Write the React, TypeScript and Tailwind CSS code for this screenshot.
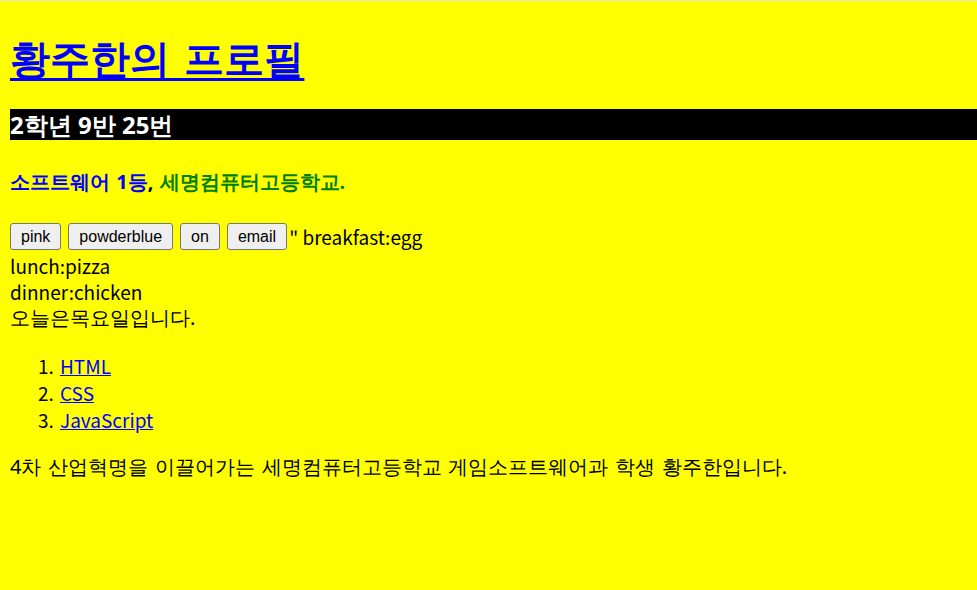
import React from 'react';

// Korean lines: Latin from Noto Sans, Hangul falls back to the full-width system face
const kr = "font-['Noto_Sans',sans-serif]";
// Latin-only lines
const lat = "font-['Noto_Sans_CJK_KR','Noto_Sans',sans-serif]";

export default function App() {
  const buttons = ['pink', 'powderblue', 'on', 'email'];
  const subjects = ['HTML', 'CSS', 'JavaScript'];

  return (
    <div className="min-h-[590px] w-full bg-[#ffff00] text-black">
      <div className="h-px bg-[#e3e3e3]" />
      <div className="pl-[10px]">
        {/* title */}
        <h1 className={`mt-[30px] text-[40px] leading-[53px] font-bold [word-spacing:4px] ${kr}`}>
          <a href="#" className="text-[#0000ff] underline decoration-[3px] underline-offset-[5px]">
            황주한의 프로필
          </a>
        </h1>

        <h2 className={`mt-[25px] bg-black text-white text-[24px] font-bold leading-[31px] ${kr}`}>
          2학년 9반 25번
        </h2>

        <p className={`mt-[28px] text-[20px] font-bold leading-[27px] [word-spacing:1px] ${kr}`}>
          <span className="text-[#0000ff]">소프트웨어 1등</span>
          <span>, </span>
          <span className="text-[#008000]">세명컴퓨터고등학교.</span>
        </p>

        {/* buttons + meals */}
        <div className={`mt-[28px] text-[19px] leading-[26px] ${lat}`}>
          <div className="flex items-start h-[30px]">
            <div className="flex gap-[7px]">
              {buttons.map((b) => (
                <button
                  key={b}
                  className="h-[27px] px-[10px] border border-[#767676] rounded-[3px] bg-[#efefef] text-[16px] leading-[18px] text-black font-['Liberation_Sans',Arial,sans-serif]"
                >
                  {b}
                </button>
              ))}
            </div>
            <span className="ml-[2px] whitespace-pre leading-[27px]">" breakfast:egg</span>
          </div>
          <div>lunch:pizza</div>
          <div>dinner:chicken</div>
          <div className={`text-[20px] ${kr}`}>오늘은목요일입니다.</div>
        </div>

        {/* subjects */}
        <ol className={`mt-[21px] pl-[28px] text-[19px] leading-[27px] ${lat}`}>
          {subjects.map((s, i) => (
            <li key={s} className="flex">
              <span className="w-[22px]">{i + 1}.</span>
              <a href="#" className="text-[#0000ff] underline">
                {s}
              </a>
            </li>
          ))}
        </ol>

        <p className={`mt-[20px] text-[20px] leading-[27px] [word-spacing:1.5px] ${kr}`}>
          4차 산업혁명을 이끌어가는 세명컴퓨터고등학교 게임소프트웨어과 학생 황주한입니다.
        </p>
      </div>
    </div>
  );
}
